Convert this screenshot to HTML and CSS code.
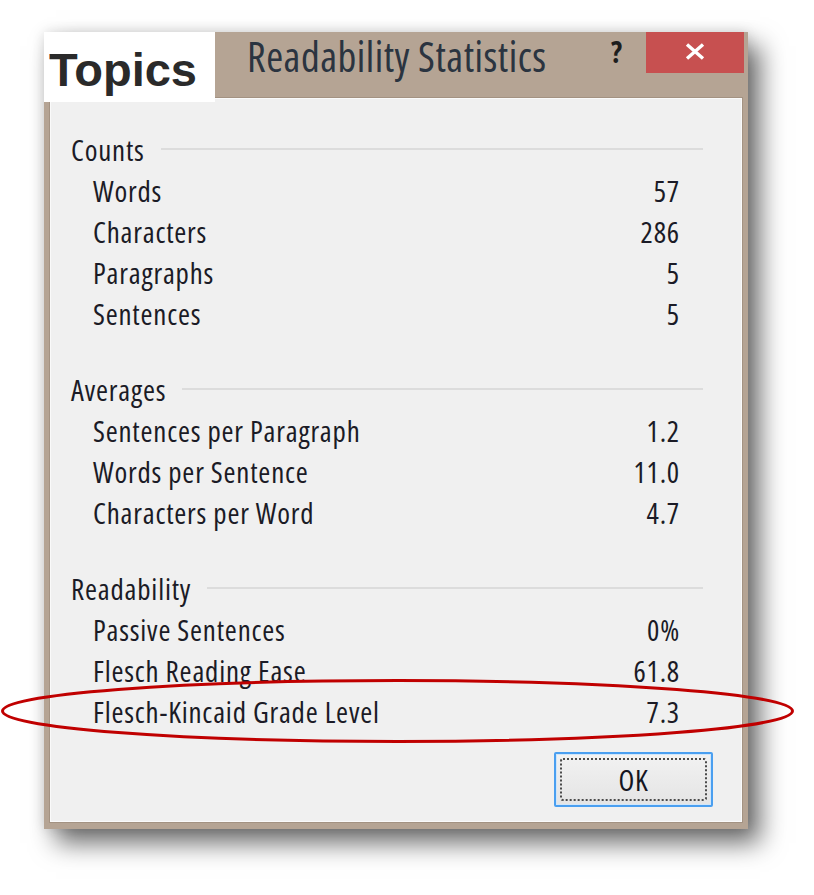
FILE: index.html
```html
<!DOCTYPE html>
<html lang="en">
<head>
<meta charset="utf-8">
<title>Readability Statistics</title>
<link rel="stylesheet" href="styles.css">
</head>
<body>
<div class="stage">
  <div class="window">
    <div class="titlebar">
      <span class="title">Readability Statistics</span>
      <span class="help">?</span>
      <div class="close">
        <svg width="20" height="17" viewBox="0 0 20 17"><path d="M2 1.5 L18 15.5 M18 1.5 L2 15.5" stroke="#fff" stroke-width="3.4" stroke-linecap="butt" fill="none"/></svg>
      </div>
    </div>
    <div class="panel">
      <section class="group">
        <div class="group-head"><span>Counts</span><i class="rule"></i></div>
        <div class="row"><span>Words</span><span>57</span></div>
        <div class="row"><span>Characters</span><span>286</span></div>
        <div class="row"><span>Paragraphs</span><span>5</span></div>
        <div class="row"><span>Sentences</span><span>5</span></div>
      </section>
      <section class="group">
        <div class="group-head"><span>Averages</span><i class="rule"></i></div>
        <div class="row"><span>Sentences per Paragraph</span><span>1.2</span></div>
        <div class="row"><span>Words per Sentence</span><span>11.0</span></div>
        <div class="row"><span>Characters per Word</span><span>4.7</span></div>
      </section>
      <section class="group">
        <div class="group-head"><span>Readability</span><i class="rule"></i></div>
        <div class="row"><span>Passive Sentences</span><span>0%</span></div>
        <div class="row"><span>Flesch Reading Ease</span><span>61.8</span></div>
        <div class="row"><span>Flesch-Kincaid Grade Level</span><span>7.3</span></div>
      </section>
      <div class="actions">
        <button class="ok"><span class="focus">OK</span></button>
      </div>
    </div>
    <div class="topics">Topics</div>
  </div>
  <svg class="mark" width="800" height="72" viewBox="0 0 800 72">
    <ellipse cx="397.5" cy="34" rx="395" ry="30.5" fill="none" stroke="#c00000" stroke-width="3"/>
  </svg>
</div>
</body>
</html>
```
FILE: styles.css
```css
html, body {
  margin: 0;
  padding: 0;
  background: #ffffff;
}

.stage {
  position: relative;
  width: 814px;
  height: 895px;
  padding: 32px 0 0 44px;
  box-sizing: border-box;
  font-family: "Open Sans", "Noto Sans", sans-serif;
  font-stretch: 75%;
}

.window {
  position: relative;
  width: 704px;
  background: #b5a494;
  padding: 0 6px 7px 6px;
  box-sizing: border-box;
  box-shadow: 12px 14px 24px rgba(0, 0, 0, 0.58), 0 0 12px rgba(0, 0, 0, 0.12);
}

.titlebar {
  height: 66px;
  display: flex;
  align-items: flex-start;
}

.title {
  margin: 4px 0 0 197px;
  font-size: 41px;
  line-height: 41px;
  letter-spacing: 0.5px;
  color: #2b3440;
  white-space: nowrap;
}

.help {
  margin: 5px 0 0 auto;
  font-size: 30px;
  line-height: 30px;
  font-weight: 700;
  color: #1e1e1e;
}

.close {
  margin: 0 -2px 0 24px;
  width: 98px;
  height: 41px;
  background: #c75050;
  display: flex;
  align-items: center;
  justify-content: center;
}

.close svg {
  display: block;
  margin-top: -2px;
}

.panel {
  background: #f0f0f0;
  border: 1px solid #fafafa;
  box-shadow: 0 0 0 1px #a39282;
  padding: 30px 28px 14px 20px;
  display: flex;
  flex-direction: column;
}

.group + .group {
  margin-top: 35px;
}

.group-head,
.row {
  height: 41px;
  font-size: 29px;
  line-height: 41px;
  letter-spacing: 0.8px;
  color: #1b1b26;
  white-space: nowrap;
}

.group-head {
  display: flex;
  align-items: center;
  margin-right: 10px;
}

.rule {
  flex: 1;
  height: 2px;
  margin: -1px 0 0 16px;
  background: #dcdcdc;
}

.row {
  display: flex;
  justify-content: space-between;
  padding: 0 33px 0 22px;
}

.actions {
  display: flex;
  justify-content: flex-end;
  margin-top: 20px;
}

.ok {
  width: 159px;
  height: 55px;
  margin: 0;
  padding: 4px;
  border: 2px solid #4a9ff0;
  border-radius: 2px;
  background: linear-gradient(#f2f2f2, #e4e4e4);
  box-shadow: inset 0 0 0 1px #cfe6fb;
  box-sizing: border-box;
  font-family: "Open Sans", "Noto Sans", sans-serif;
  font-stretch: 75%;
  cursor: default;
}

.focus {
  display: flex;
  align-items: center;
  justify-content: center;
  height: 100%;
  border: 2px dotted #4a4a4a;
  border-radius: 3px;
  box-sizing: border-box;
  font-size: 29px;
  letter-spacing: 0.8px;
  color: #15151f;
}

.topics {
  position: absolute;
  left: 0;
  top: 0;
  width: 171px;
  height: 70px;
  box-sizing: border-box;
  background: #ffffff;
  padding: 14px 0 0 5px;
  font-family: "Liberation Sans", Arial, sans-serif;
  font-stretch: 100%;
  font-weight: 700;
  font-size: 47px;
  line-height: 47px;
  color: #2a2a2a;
}

.mark {
  position: absolute;
  left: 0;
  top: 677px;
}
```
